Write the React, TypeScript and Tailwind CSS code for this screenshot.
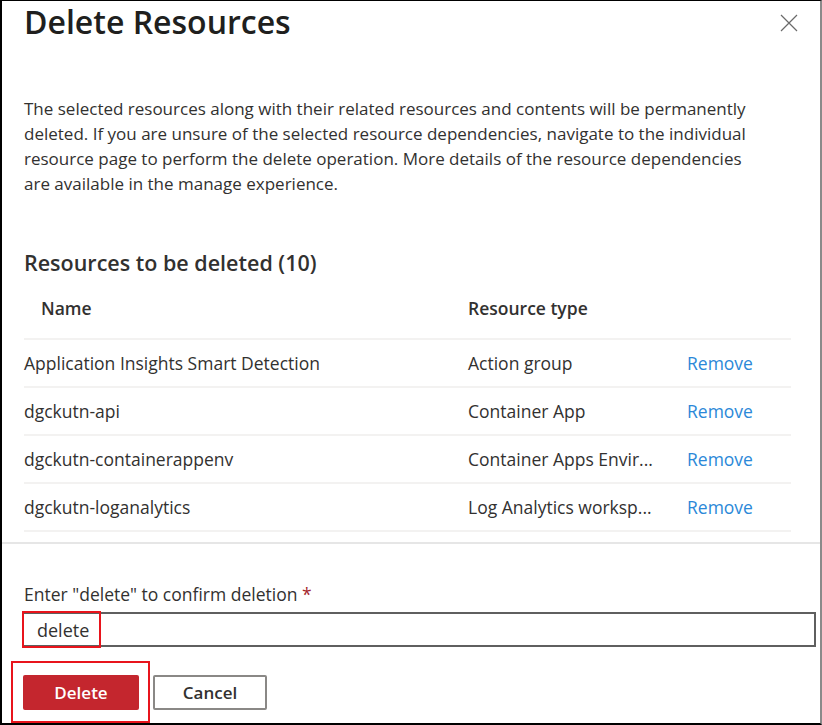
import React, { useState } from 'react';

interface Resource {
  name: string;
  type: string;
}

const resources: Resource[] = [
  { name: 'Application Insights Smart Detection', type: 'Action group' },
  { name: 'dgckutn-api', type: 'Container App' },
  { name: 'dgckutn-containerappenv', type: 'Container Apps Envir...' },
  { name: 'dgckutn-loganalytics', type: 'Log Analytics worksp...' },
];

const font = { fontFamily: '"Open Sans", "Noto Sans", sans-serif' };

const App: React.FC = () => {
  const [value, setValue] = useState('delete');

  return (
    <div
      className="w-[822px] h-[725px] bg-white text-[#323130] border-l-2 border-t border-b-2 border-l-black border-t-black border-b-black border-r-2 border-r-[#8a8a8a] flex flex-col overflow-hidden"
      style={font}
    >
      <div className="flex items-start justify-between pl-[22px] pr-[22px] pt-[1px]">
        <h1 className="text-[32px] leading-[40px] font-semibold text-[#201f1e]">
          Delete Resources
        </h1>
        <button className="mt-[12px] text-[#6a6a6a]" aria-label="Close">
          <svg width="18" height="18" viewBox="0 0 18 18" fill="none" stroke="currentColor" strokeWidth="1.2">
            <path d="M1 1L17 17M17 1L1 17" />
          </svg>
        </button>
      </div>

      <p className="mt-[54px] pl-[22px] w-[759px] text-[17px] leading-[25px]">
        The selected resources along with their related resources and contents will be permanently
        deleted. If you are unsure of the selected resource dependencies, navigate to the individual
        resource page to perform the delete operation. More details of the resource dependencies
        are available in the manage experience.
      </p>

      <h2 className="mt-[53px] pl-[22px] text-[21.5px] leading-[28px] font-semibold">
        Resources to be deleted (10)
      </h2>

      <div className="ml-[22px] mr-[29px] mt-[18px]">
        <div className="flex h-[45px] items-start border-b-2 border-[#f3f2f1] text-[17.5px] font-semibold">
          <div className="w-[444px] pl-[17px]">Name</div>
          <div>Resource type</div>
        </div>
        {resources.map((r) => (
          <div
            key={r.name}
            className="flex h-[48px] items-center border-b-2 border-[#f3f2f1] text-[17.5px]"
          >
            <div className="w-[444px]">{r.name}</div>
            <div className="w-[219px]">{r.type}</div>
            <a className="text-[#2b88d8] cursor-pointer">Remove</a>
          </div>
        ))}
      </div>

      <div className="mt-[10px] border-t-2 border-[#e6e6e6]" />

      <label className="mt-[38px] pl-[22px] text-[17.5px] leading-[24px]">
        Enter "delete" to confirm deletion <span className="text-[#a4262c]">*</span>
      </label>

      <div className="relative ml-[20px] mr-[4px] mt-[6px]">
        <input
          value={value}
          onChange={(e) => setValue(e.target.value)}
          className="w-full h-[35px] border-2 border-[#5f5f5f] px-[13px] text-[18px] outline-none bg-white"
          style={font}
        />
        <div className="absolute left-0 top-[-1px] w-[79px] h-[37px] border-2 border-[#e8141c] pointer-events-none" />
      </div>

      <div className="relative flex gap-[14px] pl-[21px] mt-[28px]">
        <button className="w-[116px] h-[35px] rounded-[2px] bg-[#c4262e] text-white text-[17px] font-semibold">
          Delete
        </button>
        <button className="w-[114px] h-[35px] rounded-[2px] border-2 border-[#8a8886] bg-white text-[17px] font-semibold">
          Cancel
        </button>
        <div className="absolute left-[9px] top-[-14px] w-[139px] h-[62px] border-2 border-[#e8141c] pointer-events-none" />
      </div>
    </div>
  );
};

export default App;
